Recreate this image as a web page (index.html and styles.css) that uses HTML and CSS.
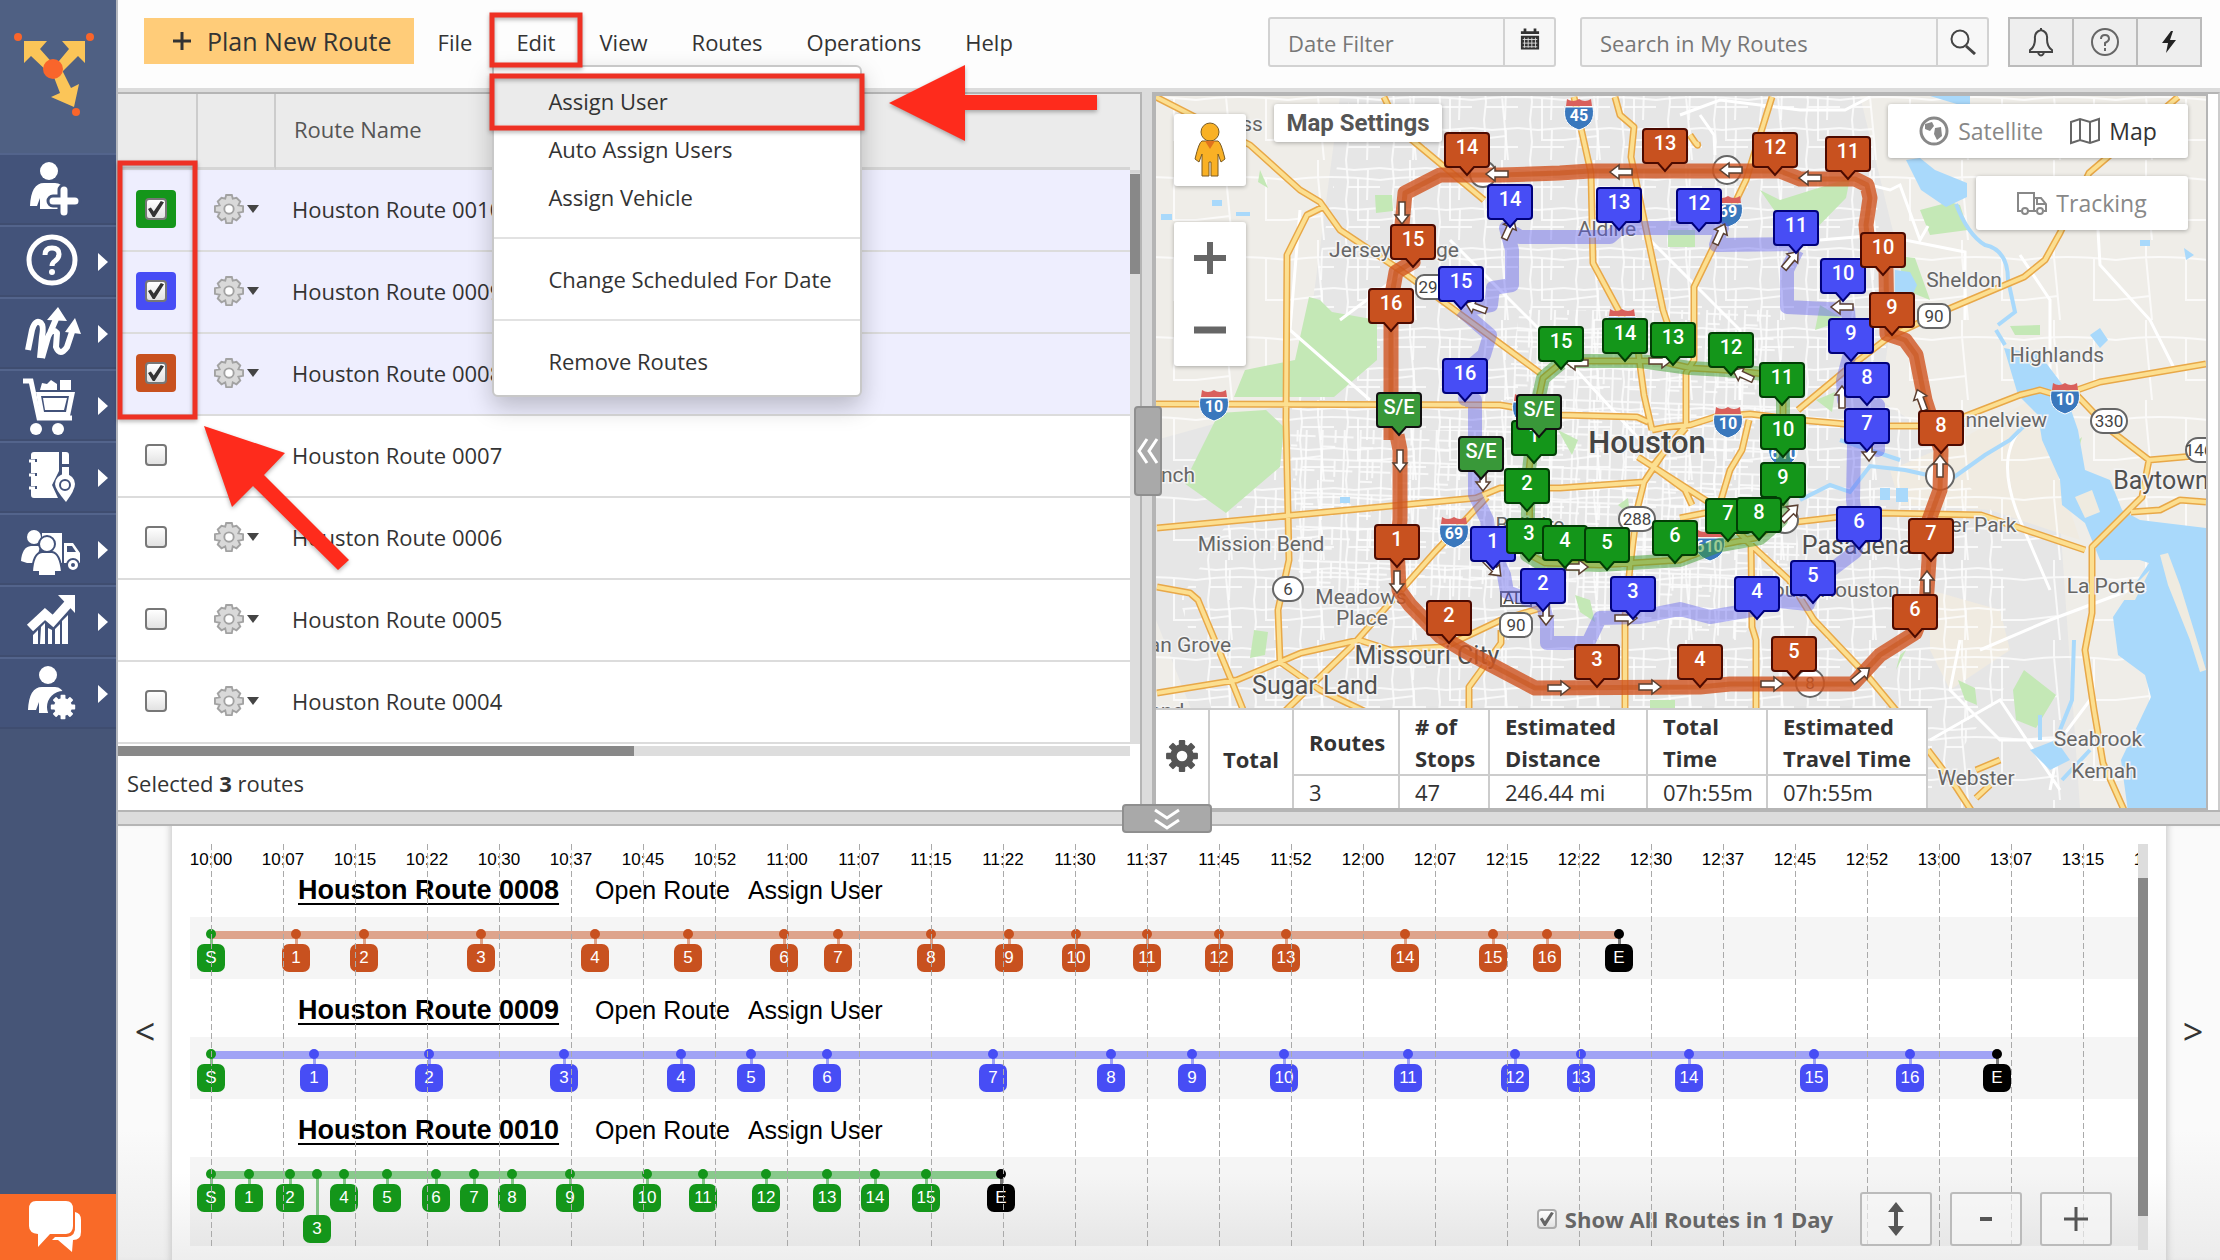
FILE: index.html
```html
<!DOCTYPE html>
<html lang="en">
<head>
<meta charset="utf-8">
<title>My Routes</title>
<link rel="stylesheet" href="styles.css">
</head>
<body>
<svg class="defs" aria-hidden="true">
  <defs>
    <symbol id="gear" viewBox="-16 -16 32 32" overflow="visible">
      <g id="teeth"><rect x="-3" y="-15" width="6" height="30" rx="1"/><rect x="-3" y="-15" width="6" height="30" rx="1" transform="rotate(45)"/><rect x="-3" y="-15" width="6" height="30" rx="1" transform="rotate(90)"/><rect x="-3" y="-15" width="6" height="30" rx="1" transform="rotate(135)"/></g>
      <circle r="11"/><circle r="5" class="gear-hole"/>
    </symbol>
    <symbol id="gear-line" viewBox="-16 -16 32 32" overflow="visible">
      <path d="M-3-15H3L4-11 8-12 12-8 10-4 15-3V3L10 4 12 8 8 12 4 10 3 15H-3L-4 10-8 12-12 8-10 4-15 3V-3L-10-4-12-8-8-12-4-11Z" fill="#d9d9d9" stroke="#a2a2a2" stroke-width="2"/>
      <circle r="5" fill="#fff" stroke="#a2a2a2" stroke-width="2"/>
    </symbol>
    <symbol id="interstate" viewBox="-15 -16 30 34" overflow="visible">
      <path d="M-14-6C-16 6-12 13 0 17 12 13 16 6 14-6Z" fill="#3a78bd" stroke="#fff"/>
      <path d="M-13-7-12-14Q-6-10 0-14 6-10 12-14L13-7Z" fill="#d9605c"/>
    </symbol>
    <symbol id="heading" viewBox="-12 -7 24 14" overflow="visible"><path d="M-11-3H2V-7L11 0 2 7V3H-11Z" fill="#fff" stroke="#5b4032" stroke-width="1.5"/></symbol>
  </defs>
</svg>

<div class="app">
  <nav class="sidebar" aria-label="Main">
    <a class="logo" href="#" aria-label="Home">
      <svg viewBox="0 0 84 88" width="84" height="88"><g fill="#fbc558"><path d="M10 9H33L26 17 42 35 36 42 17 24 10 31Z"/><path d="M71 9H48L55 17 40 35 46 42 64 24 71 31Z"/><path d="M38 40 48 38 57 56 65 52 60 75 37 65 46 61Z"/></g><g fill="#f9652b"><circle cx="39" cy="37" r="10"/><circle cx="4" cy="5" r="4"/><circle cx="76" cy="5" r="4"/><circle cx="62" cy="80" r="4"/></g></svg>
    </a>
    <a class="nav-item" href="#" aria-label="Add user"><svg viewBox="0 0 60 60"><circle cx="27" cy="12" r="9"/><path d="M8 47Q9 24 22 24H33Q40 24 43 32V50H18V39L15 47Z"/><path d="M42 31V53M31 42H53" class="line cut"/><path d="M42 31V53M31 42H53" class="line bold"/></svg></a>
    <a class="nav-item more" href="#" aria-label="Help"><svg viewBox="0 0 60 60"><ellipse cx="30" cy="29" rx="23" ry="23" class="line thick"/><path d="M23 24Q23 17 30 17 37 17 37 23 37 27 33 30 30 32 30 35" class="line thick"/><circle cx="30" cy="41" r="3"/></svg></a>
    <a class="nav-item more" href="#" aria-label="Routes"><svg viewBox="0 0 60 60"><path d="M6 47 10 27Q13 16 19 20 22 23 20 34L18 55M20 55 26 34Q30 24 35 30L34 44Q38 54 45 44L51 26M28 30 34 16" class="line route-line"/><path d="M25 17 36 4 45 18ZM43 29 53 15 59 31Z"/></svg></a>
    <a class="nav-item more" href="#" aria-label="Orders"><svg viewBox="0 0 60 60"><path d="M1 6H9L17 43H50" class="line thick"/><path d="M14 17H53L48 41H18Z"/><path d="M18 15 20 8 25 9 29 5 35 9V15ZM38 5H49V15H38Z"/><path d="M19 21H47L44 37H22Z" fill="#42527a"/><path d="M21 23H45L42 35H23Z"/><circle cx="14" cy="54" r="6"/><circle cx="36" cy="54" r="6"/></svg></a>
    <a class="nav-item more" href="#" aria-label="Address book"><svg viewBox="0 0 60 60"><path d="M12 5H37V24L30 38 36 51H12Q9 51 9 48V42H15V39H9V29H15V26H9V15H15V12H9V8Q9 5 12 5ZM40 5H44Q47 5 47 8V17H40ZM40 20H47V29H40Z"/><path d="M7 14H13M7 28H13M7 41H13" class="line"/><path d="M44 55Q33 42 33 37A10 10 0 0 1 53 37Q53 43 44 55Z"/><circle cx="43" cy="38" r="5" fill="#fff" stroke="#42527a" stroke-width="2"/></svg></a>
    <a class="nav-item more" href="#" aria-label="Team"><svg viewBox="0 0 60 60"><path d="M20 14H40V44H20ZM42 24H51L58 34V44H42Z"/><path d="M45 27H50L54 33H45Z" fill="#42527a"/><circle cx="12" cy="18" r="7"/><path d="M-1 42Q0 28 9 27H18L14 44H5Z"/><circle cx="51" cy="46" r="6" stroke="#42527a" stroke-width="2"/><circle cx="51" cy="46" r="2" fill="#42527a"/><g stroke="#42527a" stroke-width="2"><path d="M10 53Q11 34 20 33H30Q38 34 40 53H34V57H16V53Z"/><circle cx="25" cy="25" r="8"/></g></svg></a>
    <a class="nav-item more" href="#" aria-label="Reports"><svg viewBox="0 0 60 60"><path d="M8 37 23 23 31 30 48 11" class="line huge"/><path d="M36 4H53V22Z"/><path d="M11 44 16 39V53H11ZM19 36 23 32V53H18ZM26 37 30 39V53H26ZM33 38 38 33V53H33ZM40 30 46 24V53H40Z"/></svg></a>
    <a class="nav-item more" href="#" aria-label="User settings"><svg viewBox="0 0 60 60"><circle cx="26" cy="12" r="9"/><path d="M6 47Q7 24 20 24H33Q40 24 43 33L34 50H17V39L14 47Z"/><circle cx="41" cy="44" r="16" fill="#43537a"/><use href="#gear" x="28" y="31" width="26" height="26" class="nav-gear"/></svg></a>
    <button class="chat" type="button" aria-label="Chat"><svg viewBox="0 0 54 54" width="54" height="54"><path d="M8 1H38Q45 1 45 9V26Q45 33 38 34H22L10 47V34Q1 33 1 26V9Q1 1 8 1Z"/><path d="M47 12Q53 13 53 20V32Q53 40 45 40L44 52 30 40H24L27 37H39Q48 36 47 26Z"/></svg></button>
  </nav>

  <div class="content">
    <header class="topbar">
      <button class="plan" type="button"><svg width="18" height="20" viewBox="0 0 18 20"><path d="M9 1V19M0 10H18" stroke="#333" stroke-width="3"/></svg>Plan New Route</button>
      <ul class="menu">
        <li><a href="#">File</a></li>
        <li class="open"><a href="#">Edit</a>
          <ul class="dropdown">
            <li class="active"><a href="#">Assign User</a></li>
            <li><a href="#">Auto Assign Users</a></li>
            <li class="split"><a href="#">Assign Vehicle</a></li>
            <li class="split"><a href="#">Change Scheduled For Date</a></li>
            <li><a href="#">Remove Routes</a></li>
          </ul>
        </li>
        <li><a href="#">View</a></li>
        <li><a href="#">Routes</a></li>
        <li><a href="#">Operations</a></li>
        <li><a href="#">Help</a></li>
      </ul>
      <div class="field date"><input type="text" placeholder="Date Filter" aria-label="Date Filter"><button type="button" aria-label="Open calendar"><svg width="20" height="23" viewBox="0 0 22 24"><path d="M1 3H4V0H7V3H15V0H18V3H21V6H1ZM1 8H21V23H1Z" fill="#333"/><path d="M3 12H19M3 16H19M3 20H19M5 10V21M9 10V21M13 10V21M17 10V21" stroke="#ddd" stroke-width="1"/></svg></button></div>
      <div class="field search"><input type="text" placeholder="Search in My Routes" aria-label="Search in My Routes"><button type="button" aria-label="Search"><svg width="26" height="26" viewBox="0 0 26 26" fill="none" stroke="#444"><circle cx="10" cy="10" r="8.500" stroke-width="2"/><path d="M16 17 25 25" stroke-width="3"/></svg></button></div>
      <div class="tools">
        <button type="button" aria-label="Notifications"><svg width="26" height="30" viewBox="0 0 26 30" fill="none" stroke="#444" stroke-width="2"><path d="M13 3Q6 5 7 12 7 20 2 23V25H24V23Q19 20 19 12 20 5 13 3ZM12 2H14M10 26Q13 31 16 26"/></svg></button>
        <button type="button" aria-label="Help"><svg width="30" height="30" viewBox="0 0 30 30" fill="none" stroke="#666" stroke-width="2"><circle cx="15" cy="15" r="13"/><path d="M11 12Q11 8 15 8 19 8 19 12 19 14 15 16V19M15 21V24"/></svg></button>
        <button type="button" aria-label="Quick actions"><svg width="16" height="22" viewBox="0 0 16 22"><path d="M10 0 1 12H7L5 22 15 9H9L12 0Z" fill="#222"/></svg></button>
      </div>
    </header>

    <main class="workspace">
      <section class="routes">
        <div class="routes-scroll">
          <table class="route-table">
            <thead><tr><th class="c-check"></th><th class="c-gear"></th><th>Route Name</th></tr></thead>
            <tbody id="route-rows"></tbody>
          </table>
          <div class="vtrack"><div class="vthumb"></div></div>
        </div>
        <div class="htrack"><div class="hthumb"></div></div>
        <p class="selected">Selected <b>3</b> routes</p>
      </section>
      <div class="gutter"><button class="handle side" type="button" aria-label="Collapse map"><svg width="22" height="28" viewBox="0 0 22 28" fill="none" stroke="#fff" stroke-width="3"><path d="M10 2 2 14 10 26M20 2 12 14 20 26"/></svg></button></div>

      <section class="map" aria-label="Map">
        <svg class="canvas" viewBox="1156 96 1050 712" preserveAspectRatio="xMinYMin slice">
          <defs>
            <pattern id="blocks" width="46" height="40" patternUnits="userSpaceOnUse"><path d="M0 8 20 10 46 8M12 0 14 22 12 40M34 9 33 40M14 27H46" class="street"/></pattern>
            <pattern id="dense" width="38" height="34" patternUnits="userSpaceOnUse" patternTransform="rotate(2)"><path d="M0 5H38M7 0V34M20 5V22M29 0V34M7 16H38M7 26H20" class="street"/></pattern>
            <pattern id="rural" width="92" height="80" patternUnits="userSpaceOnUse"><path d="M0 20Q40 14 92 20M30 17 36 80M30 0V17M70 18V60H92M0 60 34 56" class="street"/></pattern>
          </defs>
          <rect x="1156" y="96" width="1300" height="900" fill="#efede8"/>
          <path d="M1340 96H1860L1900 260 1880 400 2060 520 2080 808H1230L1156 620V440L1300 400Z" fill="#e6e6e6"/>
          <path d="M1960 440 2030 400 2060 480 2080 540 1990 510 1900 505 1890 470ZM1930 590 2000 610 2010 650 1950 690 1930 650Z" fill="#f0ebe1"/>
          <rect x="1156" y="96" width="1300" height="900" fill="url(#rural)"/>
          <path d="M1350 96H1870L1890 400 2000 520 2010 680 1920 808H1240L1180 600 1290 420Z" fill="url(#blocks)"/>
          <path d="M1520 310H1770L1800 560 1740 640 1540 600 1300 590 1290 430 1500 430Z" fill="url(#dense)"/>
          <g class="park">
            <path d="M1309 297 1320 300 1332 312 1377 320V360L1334 397H1234L1245 370 1295 360Z"/>
            <path d="M1219 413 1266 410 1284 427 1280 467 1226 513 1184 483Z"/>
            <path d="M1375 195H1392L1393 211 1376 213ZM1760 190 1780 200 1850 178 1846 198 1800 245 1788 230Z"/>
            <path d="M1920 210 1950 202 1960 205 1968 230 1930 235ZM2010 326 2040 325 2040 335 2015 335ZM2013 690 2024 670 2056 695 2036 728 2016 720Z"/>
            <path d="M1254 630 1268 632 1265 655 1250 658ZM1575 595 1590 600 1595 622 1580 612ZM1896 670 1906 650 1900 655ZM1958 680 1975 688 1977 705 1965 700ZM1650 700H1675V710H1650ZM1260 170 1268 188 1258 182ZM1668 230H1695V247H1668ZM1898 256 1915 258 1930 300 1905 290ZM2062 455 2082 437 2076 460ZM1820 305 1845 320 1815 330ZM1558 430 1578 440 1572 455ZM1816 400 1835 392 1832 412ZM1618 505 1628 498 1630 515Z"/>
          </g>
          <g class="street wide">
            <path d="M1680 115 1720 100 1800 110 1845 110 1870 97M1700 115 1714 135 1715 155M1850 180 1890 190 1900 185 1920 240 1928 226M1820 240 1880 235 1965 252V320M2020 255 2050 300V380M2098 230 2100 265 2150 320 2175 370M1450 240 1540 330 1640 440M1300 210 1290 330 1370 400M1340 320 1420 260M1640 230 1740 330 1740 400M2020 430Q1995 460 2020 520L2050 590M1930 740 2000 700 2060 790M1960 640 1950 690 2000 740 2080 740M1980 650 2050 620 2130 590M2050 790 2060 740 2090 700"/>
          </g>
          <g class="water">
            <path d="M2099 547 2124 525 2206 530H2500V900H2140L2121 760 2151 697 2145 675 2118 655 2113 617 2149 563Z"/>
            <path d="M2004 348 2040 355 2062 384 2078 430 2085 470 2110 480 2122 510 2140 520 2206 528V560H2100L2085 523 2062 505 2060 480 2042 440 2038 415 2018 395Z"/>
            <path d="M1906 160 1920 158 1935 170 1967 183V197L1946 207 1921 190ZM1895 270 1910 272 1917 285 1908 305 1895 295ZM1930 96H1970V108ZM2090 335 2100 328 2108 340 2100 348ZM2030 750 2056 740 2070 760 2050 770ZM2140 240H2150V246H2140ZM2184 248 2194 255 2186 260Z"/>
            <path d="M1956 204Q1968 235 1985 245 2008 250 2008 280L2015 312 1998 325M1996 330 2005 345M1800 500 1830 485 1850 492 1870 466 1905 470 1950 480 1985 455 2010 440 2030 420M1840 440 1900 460M2062 780 2090 750M2074 640 2072 700 2060 730M2040 715V740" class="river"/>
            <path d="M1880 488H1890V500H1880ZM1896 488H1908V502H1896ZM1212 200H1222V206H1212ZM1236 212H1250V216H1236ZM1340 497H1350V503H1340ZM1161 214H1172V220H1161Z"/>
          </g>
          <g fill="#efebe0"><path d="M2075 497 2092 490 2100 512 2085 518ZM2160 555 2168 553 2180 585 2200 650 2206 670 2200 672 2190 640 2168 585ZM2120 600 2150 570 2135 600Z"/></g>
          <g class="hwy">
            <path id="roads" d="M1156 404 1500 405 1560 415 1637 417 1648 422M1652 430 1668 427 1690 425 1715 417 1750 414 1800 420 1867 426 1940 426 2020 395 2040 390 2060 396 2100 382 2206 364M1156 97 1250 145 1300 190 1320 202 1340 230 1400 270 1475 325 1540 373M1384 97 1400 130 1484 200M1323 207 1307 215 1287 255 1286 420 1289 560 1278 610 1280 662 1320 690 1366 712M1574 97 1591 173 1593 263 1620 313 1638 350 1644 395 1652 430M1615 97 1620 115 1634 127 1631 157 1663 310 1668 325M1772 97 1746 180 1694 287V360L1686 373V425L1652 467M1749 420 1742 450 1730 470 1721 500M1798 410 1846 370 1889 337 1946 310 2024 277 2045 260 2060 233 2089 173 2178 97M1157 528 1476 498 1500 488 1560 488 1644 482 1662 455 1686 428M1487 497 1434 553 1351 647 1284 712M1157 587 1190 593 1198 600 1230 677 1244 712M1157 693 1237 680 1301 653 1359 640 1390 650 1444 647 1501 620 1544 607M1501 630 1501 643 1469 687V712M1625 712V617L1630 567 1637 510 1644 482M1638 457 1652 466 1685 490 1692 505M1652 466 1713 505 1749 543 1789 580 1814 620 1871 680 1900 715M1928 750 1956 787 1971 810M1751 543 1752 627 1756 640V712M1680 518 1705 513 1796 522 1839 517 1881 513 1981 515 2085 550M2070 388 2110 430 2149 460 2142 497 2092 547V613L2085 650 2094 710 2103 763 2124 810M2149 460 2206 455M2131 512 2160 510 2180 500 2206 502M1690 135Q1700 150 1697 143M1976 770 2000 760M1976 798 1990 785M1561 363 1543 378 1536 410 1529 470 1530 555 1545 563 1600 565 1680 560 1720 545 1755 538 1781 520 1783 460V385L1765 374 1725 370 1690 368 1660 361H1570"/>
            <use href="#roads" class="core"/>
          </g>
          <g class="towns">
            <text x="1252" y="131">ss</text><text x="1394" y="257">Jersey Village</text><text x="1607" y="236">Aldine</text><text x="1964" y="287">Sheldon</text><text x="2057" y="362">Highlands</text><text x="1988" y="427">Channelview</text><text x="1178" y="482">nch</text><text x="1261" y="551">Mission Bend</text><text x="1361" y="604">Meadows</text><text x="1362" y="625">Place</text><text x="1190" y="652">an Grove</text><text x="1167" y="718">end</text><text x="1830" y="597">South Houston</text><text x="1971" y="532">Deer Park</text><text x="1530" y="532">Bellaire</text><text x="2106" y="593">La Porte</text><text x="2098" y="746">Seabrook</text><text x="2104" y="778">Kemah</text><text x="1976" y="785">Webster</text>
          </g>
          <g class="cities"><text x="1427" y="664">Missouri City</text><text x="1315" y="694">Sugar Land</text><text x="1857" y="554">Pasadena</text><text x="2161" y="489">Baytown</text></g>
          <text class="metro" x="1647" y="453">Houston</text>
          <g class="shields">
            <use href="#interstate" x="1564" y="97" width="30" height="34"/><text x="1579" y="121">45</text>
            <use href="#interstate" x="1199" y="388" width="30" height="34"/><text x="1214" y="412">10</text>
            <use href="#interstate" x="1713" y="405" width="30" height="34"/><text x="1728" y="429">10</text>
            <use href="#interstate" x="2050" y="381" width="30" height="34"/><text x="2065" y="405">10</text>
            <use href="#interstate" x="1439" y="515" width="30" height="34"/><text x="1454" y="539">69</text>
            <use href="#interstate" x="1713" y="194" width="30" height="34"/><text x="1728" y="217">69</text>
            <use href="#interstate" x="1607" y="307" width="30" height="34"/>
            <use href="#interstate" x="1512" y="392" width="30" height="34"/>
            <use href="#interstate" x="1692" y="528" width="36" height="34"/><text x="1709" y="552">610</text>
            <use href="#interstate" x="1765" y="434" width="36" height="34"/><text x="1784" y="459">610</text>
          </g>
          <g class="ovals">
            <rect x="1273" y="577" width="30" height="24" rx="12"/><text x="1288" y="595">6</text>
            <rect x="1619" y="507" width="36" height="24" rx="12"/><text x="1637" y="525">288</text>
            <rect x="2091" y="409" width="36" height="24" rx="12"/><text x="2109" y="427">330</text>
            <rect x="2186" y="438" width="36" height="24" rx="12"/><text x="2199" y="456">146</text>
            <rect x="1416" y="275" width="30" height="24" rx="8"/><text x="1428" y="293">29</text>
            <rect x="1918" y="304" width="32" height="24" rx="8"/><text x="1934" y="322">90</text>
            <rect x="1500" y="613" width="32" height="24" rx="8"/><text x="1516" y="631">90</text>
            <rect x="1501" y="592" width="30" height="14"/><text x="1513" y="604">AL</text>
            <circle cx="1785" cy="520" r="13"/>
            <circle cx="1483" cy="174" r="13"/><circle cx="1727" cy="170" r="14"/><circle cx="1940" cy="476" r="14"/><circle cx="1810" cy="683" r="14"/><text x="1810" y="689">8</text>
          </g>
          <path class="path red" d="M1397 435 1400 450V520L1397 545 1399 590 1410 605 1440 636 1465 651 1535 688 1700 687 1730 684H1853L1880 655 1915 633 1926 605 1929 560V520L1940 490 1941 450 1925 400 1916 355 1905 340 1887 334 1886 270 1868 245 1866 225 1870 198 1867 185 1855 179 1800 179 1780 171H1590L1560 173 1500 175H1440L1405 193 1402 225 1413 262 1396 272 1391 300V440"/>
          <path class="path core-line" d="M1400 450V520L1397 545 1399 590 1410 605 1440 636 1465 651 1535 688 1700 687 1730 684H1853L1880 655 1915 633 1926 605 1929 560V520L1940 490 1941 450 1925 400 1916 355 1905 340 1887 334 1886 270 1868 245 1866 225 1870 198 1867 185 1855 179 1800 179 1780 171H1590L1560 173 1500 175H1440L1405 193 1402 225 1413 262 1396 272 1391 300V440"/>
          <path class="path blue" d="M1480 480 1475 470V400L1465 399 1472 365 1484 355 1490 335 1461 310M1465 400H1475V495L1487 520 1490 545 1504 575 1507 592 1543 605 1547 620V643H1588L1600 618 1640 617 1680 609 1710 617 1757 609 1770 600 1808 604 1818 580 1855 552 1858 540 1853 500 1854 445 1878 450V405L1844 400 1843 380 1851 350 1848 310 1787 307V270L1797 250M1790 244 1716 245 1722 228 1620 228 1610 237 1520 237 1506 228 1512 250 1512 285 1493 288 1491 305 1461 310"/>
          <path class="path green" d="M1561 363 1543 378 1536 410 1529 470 1527 555 1540 563 1600 565 1680 560 1720 545 1760 538 1781 520 1783 460V385L1765 374 1725 370 1690 368 1640 361H1570"/>
          <g id="headings"></g>
          <g id="markers" class="markers"></g>
        </svg>

        <button class="map-btn pegman" type="button" aria-label="Street View"><svg width="32" height="56" viewBox="0 0 32 56" fill="#f9b125" stroke="#7a5b24"><circle cx="16" cy="10" r="9"/><path d="M8 19H24Q27 20 31 37L27 40 24 32V54H17V40H15V54H8V32L5 40 1 37Q5 20 8 19Z"/><path d="M11 19H21L16 27Z" fill="#e0731d" stroke="none"/></svg></button>
        <div class="zoom"><button type="button" aria-label="Zoom in"><svg width="32" height="32" viewBox="0 0 32 32"><path d="M16 0V32M0 16H32" stroke="#666" stroke-width="6"/></svg></button><button type="button" aria-label="Zoom out"><svg width="32" height="32" viewBox="0 0 32 32"><path d="M0 16H32" stroke="#666" stroke-width="7"/></svg></button></div>
        <button class="map-btn settings" type="button">Map Settings</button>
        <div class="map-type">
          <button type="button" class="off"><svg width="30" height="30" viewBox="0 0 30 30"><circle cx="15" cy="15" r="13" fill="none" stroke="#888" stroke-width="3"/><path d="M6 8 13 6 15 10 11 15 6 13ZM16 12 22 11 23 20 18 24 15 18Z" fill="#888"/></svg>Satellite</button>
          <button type="button"><svg width="30" height="28" viewBox="0 0 30 28" fill="none" stroke="#666" stroke-width="2"><path d="M1 5 10 2 20 5 29 2V23L20 26 10 23 1 26ZM10 2V23M20 5V26"/></svg>Map</button>
        </div>
        <button class="map-btn tracking" type="button"><svg width="30" height="24" viewBox="0 0 30 24" fill="none" stroke="#888" stroke-width="2"><path d="M4 20H1V2H17V20H11M17 7H24L29 13V20H27M19 20H17M20 8V13H28"/><circle cx="8" cy="20" r="3"/><circle cx="23" cy="20" r="3"/></svg>Tracking</button>

        <table class="stats">
          <thead><tr><td rowspan="2" class="s-gear"><button type="button" aria-label="Table settings"><svg width="34" height="34"><use href="#gear" width="34" height="34"/></svg></button></td><th rowspan="2" class="s-total">Total</th><th class="s-routes">Routes</th><th class="s-stops"># of Stops</th><th class="s-dist">Estimated Distance</th><th class="s-time">Total Time</th><th class="s-travel">Estimated Travel Time</th></tr>
          <tr><td>3</td><td>47</td><td>246.44 mi</td><td>07h:55m</td><td>07h:55m</td></tr></thead>
        </table>
      </section>
      <div class="edge"></div>
    </main>

    <div class="divider"><button class="handle base" type="button" aria-label="Collapse timeline"><svg width="28" height="22" viewBox="0 0 28 22" fill="none" stroke="#fff" stroke-width="3"><path d="M2 2 14 10 26 2M2 12 14 20 26 12"/></svg></button></div>

    <section class="timeline" aria-label="Timeline">
      <button class="pager prev" type="button">&lt;</button>
      <div class="chart">
        <div class="plot" id="plot"></div>
        <div class="track"><div class="thumb"></div></div>
        <div class="controls">
          <label><input type="checkbox" checked> Show All Routes in 1 Day</label>
          <button type="button" aria-label="Fit height"><svg width="16" height="34" viewBox="0 0 16 34"><path d="M8 0 16 10H10V24H16L8 34 0 24H6V10H0Z" fill="#555"/></svg></button>
          <button type="button" aria-label="Zoom timeline out"><svg width="24" height="24" viewBox="0 0 24 24"><path d="M6 12H18" stroke="#555" stroke-width="4"/></svg></button>
          <button type="button" aria-label="Zoom timeline in"><svg width="24" height="24" viewBox="0 0 24 24"><path d="M12 0V24M0 12H24" stroke="#555" stroke-width="3"/></svg></button>
        </div>
      </div>
      <button class="pager next" type="button">&gt;</button>
    </section>
  </div>

  <svg class="callouts" width="1120" height="600" viewBox="0 0 1120 600" aria-hidden="true">
    <g fill="none" stroke="#ee3124" stroke-width="5"><rect x="492" y="15" width="88" height="50"/><rect x="492" y="76" width="370" height="52"/><rect x="120" y="163" width="75" height="254"/></g>
    <g fill="#fe2b1c"><path d="M889 103 965 65V95H1097V110H965V141Z"/><path d="M204 426 285 453 264 475 349 560 338 570 253 486 232 507Z"/></g>
  </svg>
</div>
<script src="app.js"></script>
</body>
</html>
```
FILE: styles.css
```css
* { box-sizing: border-box; }
body { margin: 0; font: 22px/30px "Open Sans", "Noto Sans", sans-serif; color: #333; background: #fff; }
button { font: inherit; color: inherit; border: 0; padding: 0; background: none; cursor: pointer; }
a { color: inherit; text-decoration: none; }
ul { list-style: none; margin: 0; padding: 0; }
svg { display: block; }
.defs { position: absolute; width: 0; height: 0; }
.gear-hole { fill: #fff; }

.app { position: relative; display: flex; min-height: 100vh; overflow: hidden; }
.content { flex: 1; min-width: 0; display: flex; flex-direction: column; border-left: 2px solid #b5b8be; }

/* Sidebar */
.sidebar { width: 116px; flex: none; display: flex; flex-direction: column; background: #465577; }
.logo { height: 153px; padding: 32px 0 0 14px; background: #4f6083; }
.nav-item { position: relative; height: 72px; display: flex; align-items: center; padding-left: 22px; border-top: 2px solid #53648c; border-bottom: 2px solid #3f4d70; background: #43537a; }
.nav-item svg { width: 60px; height: 60px; fill: #fff; overflow: visible; }
.nav-item .line { fill: none; stroke: #fff; stroke-width: 3; }
.nav-item .thick { stroke-width: 5; }
.nav-item .route-line { stroke-width: 6; stroke-linejoin: round; }
.nav-item .bold { stroke-width: 7; stroke-linejoin: round; stroke-linecap: round; }
.nav-item .cut { stroke: #43537a; stroke-width: 13; stroke-linecap: round; }
.nav-item .huge { stroke-width: 9; }
.nav-item .gear-hole, .nav-gear .gear-hole { fill: #42527a; }
.nav-gear { stroke: none; }
.more::after { content: ""; position: absolute; right: 8px; top: 26px; border: 9px solid transparent; border-left: 10px solid #fff; border-right: 0; }
.chat { height: 66px; margin-top: auto; padding: 6px 28px; background: #f96a28; }
.chat svg { fill: #fff; }

/* Top bar */
.topbar { display: flex; align-items: center; height: 88px; padding: 0 18px 4px 26px; background: #fdfdfd; }
.plan { display: flex; align-items: center; gap: 16px; height: 46px; margin-top: -2px; padding: 0 22px 0 29px; font-size: 25px; background: #ffcc79; white-space: nowrap; }
.menu { display: flex; margin-left: 2px; }
.menu > li { position: relative; }
.menu > li > a { display: block; padding: 0 22px; }
.dropdown { position: absolute; z-index: 5; left: -2px; top: 38px; width: 370px; padding: 10px 0; background: #fff; border: 2px solid #c8c8c8; border-radius: 0 6px 6px 6px; box-shadow: 0 10px 24px rgba(0,0,0,.22); }
.dropdown a { display: block; padding: 9px 0 9px 54px; white-space: nowrap; }
.dropdown .active { background: #ebebeb; }
.dropdown .split { padding-bottom: 16px; margin-bottom: 16px; border-bottom: 2px solid #e2e2e2; }
.field { display: flex; height: 50px; border: 2px solid #d2d2d2; border-radius: 3px; background: #f7f7f7; }
.field input { flex: 1; min-width: 0; padding: 2px 18px 0; font: inherit; border: 0; border-right: 2px solid #d2d2d2; background: none; outline: 0; }
.field input::placeholder { color: #777; opacity: 1; }
.field button { width: 49px; display: grid; place-items: center; }
.date button { padding-bottom: 6px; }
.date { width: 288px; margin-left: auto; }
.search { width: 409px; margin-left: 24px; }
.tools { display: flex; width: 194px; height: 50px; margin-left: 19px; border: 2px solid #bbb; background: #eee; }
.tools button { flex: 1; display: grid; place-items: center; }
.tools button + button { border-left: 2px solid #bbb; }

/* Route list */
.workspace { display: grid; grid-template-columns: 1024fr 10px 1056fr 12px; border-top: 4px solid #dcdcdc; }
.routes { display: flex; flex-direction: column; border-top: 2px solid #b5b5b5; border-right: 2px solid #b5b5b5; min-width: 0; }
.routes-scroll { display: flex; position: relative; }
.route-table { flex: 1; border-collapse: separate; border-spacing: 0; table-layout: fixed; }
.route-table th { height: 76px; padding: 0 0 4px 18px; text-align: left; font-weight: 400; color: #555; background: #ebebeb; border-right: 2px solid #ccc; border-bottom: 3px solid #d5d5d5; }
.route-table th:last-child { border-right: 0; }
.route-table td { height: 82px; padding: 0 0 2px 16px; border-bottom: 2px solid #dcdcdc; }
.route-table td:first-child { padding-left: 18px; }
.route-table .c-check { width: 80px; }
.route-table .c-gear { width: 78px; }
.route-table .picked td { background: #eeeefe; }
.chip { display: grid; place-items: center; width: 40px; height: 38px; border-radius: 4px; }
.chip.red, .stop.red { background: #c8511f; }
.chip.blue, .stop.blue { background: #474df5; }
.chip.green, .stop.green { background: #14961a; }
input[type=checkbox] { appearance: none; position: relative; width: 22px; height: 22px; margin: 0; border: 2px solid #777; border-radius: 4px; background: linear-gradient(#fff, #e2e2e2); }
input[type=checkbox]:checked::before { content: ""; position: absolute; inset: 1px; background: #333; clip-path: polygon(0 50%, 18% 40%, 36% 66%, 80% 0, 100% 8%, 42% 100%, 30% 100%); }
.row-menu { display: flex; align-items: center; gap: 3px; }
.row-menu::after { content: ""; border: 6px solid transparent; border-top: 8px solid #444; border-bottom: 0; }
.vtrack { width: 10px; margin-top: 76px; padding-top: 4px; background: #ddd; }
.routes-scroll::after { content: ""; position: absolute; right: 0; top: 0; width: 10px; height: 76px; background: #ebebeb; border-bottom: 3px solid #d5d5d5; }
.vthumb { height: 100px; background: #888; }
.htrack { margin: 2px 10px 0 0; background: #ddd; }
.hthumb { width: 51%; height: 10px; background: #888; }
.selected { margin: 0; padding: 12px 9px; }

.gutter { position: relative; background: #dcdcdc; }
.handle { position: absolute; z-index: 3; display: grid; place-items: center; background: #a9a9a9; border: 2px solid #8f8f8f; border-radius: 4px; }
.handle.side { left: -8px; top: 314px; width: 28px; height: 90px; }
.handle.base { left: 1004px; top: -8px; width: 90px; height: 29px; }
.divider { position: relative; height: 16px; background: #dcdcdc; border: 2px solid #b5b5b5; border-width: 2px 0; }
.edge { background: #fff; border-top: 2px solid #b5b5b5; border-right: 2px solid #ccc; }

/* Map */
.map { position: relative; min-width: 0; overflow: hidden; border: solid #b5b5b5; border-width: 4px 2px 2px 4px; font-family: Roboto, sans-serif; background: #e8e8e6; }
.canvas { position: absolute; inset: 0; width: 100%; height: 100%; }
.street { fill: none; stroke: #fff; stroke-width: 2; opacity: .75; }
.wide { stroke-width: 3; opacity: 1; }
.park { fill: #c4e8b6; }
.water { fill: #a9d9fb; }
.river { stroke: #a9d9fb; stroke-width: 4; fill: none; }
.hwy { fill: none; stroke: #e8a848; stroke-width: 7; stroke-linejoin: round; }
.hwy .core { stroke: #fcdf90; stroke-width: 4; }
.towns, .cities, .metro { text-anchor: middle; fill: #666; font-size: 21px; paint-order: stroke; stroke: #f4f4f4; stroke-width: 3px; }
.cities { font-size: 25px; fill: #505050; }
.metro { font-size: 31px; font-weight: 500; fill: #444; }
.shields { text-anchor: middle; font-size: 16px; font-weight: 700; fill: #fff; }
.ovals { font-size: 17px; text-anchor: middle; fill: #fff; stroke: #666; stroke-width: 2; }
.ovals text { fill: #444; stroke: none; }
.path { fill: none; stroke-width: 15; stroke-linejoin: round; }
.path.red { stroke: #cf5420; opacity: .8; }
.core-line { stroke: #c8571f; stroke-width: 5; opacity: .6; }
.path.blue { stroke: #5a5aee; opacity: .42; stroke-width: 14; }
.path.green { stroke: #3a9a2a; opacity: .5; stroke-width: 14; }
.markers { font-size: 20px; font-weight: 500; text-anchor: middle; }
.markers text { fill: #fff; }
.markers path { stroke-width: 2; }
.markers .red { fill: #c8511f; stroke: #4c0a00; }
.markers .blue { fill: #474df5; stroke: #00007a; }
.markers .green { fill: #14961a; stroke: #023d05; }
.markers .depot { fill: #399839; stroke: #111; }
.map-btn, .zoom, .map-type { position: absolute; display: flex; align-items: center; justify-content: center; background: #fff; border-radius: 3px; box-shadow: 0 1px 4px rgba(0,0,0,.3); }
.pegman { left: 18px; top: 18px; width: 72px; height: 72px; }
.zoom { left: 18px; top: 126px; width: 72px; height: 144px; flex-direction: column; }
.zoom button { flex: 1; }
.settings { left: 118px; top: 8px; width: 168px; height: 38px; font-size: 24px; font-weight: 700; color: #555; }
.map-type { right: 18px; top: 8px; width: 300px; height: 54px; gap: 27px; font-family: "Open Sans", sans-serif; font-size: 23px; }
.map-type button { display: flex; align-items: center; gap: 9px; }
.off, .tracking { color: #888; }
.tracking { right: 18px; top: 80px; width: 212px; height: 54px; gap: 9px; font-family: "Open Sans", sans-serif; font-size: 23px; }
.stats { position: absolute; left: -2px; bottom: -2px; border-collapse: collapse; background: #fff; font: 22px/32px "Open Sans", sans-serif; }
.stats th, .stats td { padding: 0 0 0 15px; text-align: left; border: 2px solid #ccc; }
.stats td { height: 34px; }
.stats th { height: 66px; }
.stats .s-gear { width: 54px; padding: 0 0 0 9px; fill: #555; }
.stats .s-total { width: 84px; padding: 0 0 0 13px; vertical-align: middle; }
.s-routes { width: 106px; }
.s-stops { width: 90px; }
.s-dist { width: 158px; }
.s-time { width: 120px; }
.s-travel { width: 160px; }

/* Timeline */
.timeline { flex: 1; display: flex; }
.pager { width: 54px; padding-bottom: 22px; font-size: 36px; background: linear-gradient(#fafafa 70%, #ececec); }
.prev { box-shadow: inset -6px 0 6px -4px #ccc; }
.next { box-shadow: inset 6px 0 6px -4px #ccc; }
.chart { position: relative; flex: 1; min-width: 0; display: flex; padding: 18px 18px 12px; background: linear-gradient(#fff 80%, #eee); font-family: "Liberation Sans", Arial, sans-serif; color: #000; }
.plot { position: relative; flex: 1; min-width: 0; overflow: hidden; }
.ticks { height: 31px; font-size: 17px; line-height: 32px; }
.tick { position: absolute; top: 0; bottom: 2px; width: 60px; margin-left: -30px; text-align: center; }
.tick::before { content: ""; position: absolute; z-index: 2; left: 30px; top: 0; bottom: 0; width: 1px; background: repeating-linear-gradient(#aaa 0 6px, transparent 6px 9px); }
.lane { margin-bottom: 16px; }
.lane:last-child { margin-bottom: 2px; }
.lane-head { display: flex; align-items: center; height: 30px; margin-bottom: 12px; padding-left: 108px; font-size: 25px; position: relative; }
.lane-head .name { margin-right: 36px; font-size: 27px; font-weight: 700; text-decoration: underline; text-decoration-thickness: 2px; text-underline-offset: 4px; }
.lane-head .act { margin-right: 18px; }
.band { position: relative; height: 62px; background: rgba(0,0,0,.04); }
.band.tall { height: 89px; }
.bar { position: absolute; left: 21px; top: 14px; height: 8px; }
.bar.red { background: #dea48c; }
.bar.blue { background: #a0a3f5; }
.bar.green { background: #89c98c; }
.stop { position: absolute; top: 27px; width: 28px; height: 28px; margin-left: 7px; border-radius: 7px; color: #fff; font-size: 17px; line-height: 28px; text-align: center; }
.stop::before { content: ""; position: absolute; left: 9px; top: -15px; width: 10px; height: 10px; border-radius: 50%; background: inherit; }
.stop::after { content: ""; position: absolute; left: 13px; top: -6px; width: 3px; height: 6px; background: inherit; opacity: .5; }
.stop.low { top: 58px; }
.stop.low::before { top: -46px; }
.stop.low::after { top: -37px; height: 37px; }
.stop.end { background: #000; }
.track { width: 10px; padding-top: 34px; background: #ddd; margin-bottom: -2px; }
.thumb { height: 338px; background: #888; }
.controls { position: absolute; z-index: 4; right: 54px; bottom: 14px; display: flex; align-items: center; gap: 18px; color: #666; }
.controls label { display: flex; align-items: center; gap: 8px; margin-right: 9px; font: 700 22px/30px "Open Sans", sans-serif; }
.controls label input { width: 20px; height: 20px; border-color: #aaa; }
.controls label input:checked::before { background: #666; }
.controls button { display: grid; place-items: center; width: 72px; height: 54px; border: 2px solid #bbb; border-radius: 3px; background: rgba(248,248,248,.6); }

.callouts { position: absolute; z-index: 10; left: 0; top: 0; pointer-events: none; filter: drop-shadow(0 2px 2px rgba(0,0,0,.3)); }
```
FILE: app.js
```js
const routes = [
  { name: 'Houston Route 0010', color: 'green' }, { name: 'Houston Route 0009', color: 'blue' },
  { name: 'Houston Route 0008', color: 'red' }, { name: 'Houston Route 0007', noMenu: true },
  { name: 'Houston Route 0006' }, { name: 'Houston Route 0005' }, { name: 'Houston Route 0004' }
];
const gear = '<button class="row-menu" type="button" aria-label="Route actions"><svg width="30" height="30"><use href="#gear-line" width="30" height="30"/></svg></button>';
document.getElementById('route-rows').innerHTML = routes.map(r => `
  <tr class="${r.color ? 'picked' : ''}"><td><span class="chip ${r.color || ''}"><input type="checkbox" aria-label="${r.name}" ${r.color ? 'checked' : ''}></span></td>
  <td>${r.noMenu ? '' : gear}</td><td>${r.name}</td></tr>`).join('');

/* Map markers: label, x of the tip, top of the box */
const markers = {
  red: [[14,1467,132],[13,1665,128],[12,1775,132],[11,1848,136],[10,1883,232],[9,1892,292],[8,1941,410],[7,1931,518],[6,1915,594],[5,1794,636],[4,1700,644],[3,1597,644],[2,1449,600],[1,1397,524],[15,1413,224],[16,1391,288]],
  blue: [[14,1510,184],[13,1619,187],[12,1699,188],[11,1796,210],[10,1843,258],[9,1851,318],[8,1867,362],[7,1867,408],[6,1859,506],[5,1813,560],[4,1757,576],[3,1633,576],[2,1543,568],[1,1493,526],[16,1465,358],[15,1461,266]],
  green: [[15,1561,326],[14,1625,318],[13,1673,322],[12,1731,332],[11,1782,362],[10,1783,414],[9,1783,462],[7,1728,498],[8,1759,497],[6,1675,520],[3,1529,518],[4,1565,525],[5,1607,527],[2,1527,468],[1,1534,420]],
  depot: [['S/E',1539,394],['S/E',1399,392],['S/E',1481,436]]
};
const order = ['blue', 'red', 'green', 'depot'];
document.getElementById('markers').innerHTML = order.map(c => markers[c].map(([t, x, y]) =>
  `<path class="${c}" d="M${x - 19} ${y + 1}h38q3 0 3 3v28q0 3-3 3h-12l-7 8-7-8h-12q-3 0-3-3v-28q0-3 3-3z"/><text x="${x}" y="${y + 22}">${t}</text>`).join('')).join('');

const headings = [[1497,174,180],[1621,172,180],[1731,170,180],[1810,178,180],[1402,213,90],[1400,461,90],[1397,582,90],[1559,688,0],[1650,687,0],[1772,684,0],[1861,675,-40],[1927,582,-90],[1940,466,-90],[1921,400,-110],[1720,234,-65],[1791,260,-50],[1842,307,180],[1476,307,-160],[1509,229,-65],[1626,618,0],[1546,614,90],[1577,567,0],[1743,375,-155],[1577,363,180],[1660,361,0],[1483,480,90],[1869,450,90],[1790,513,-45],[1493,568,45],[1842,397,-90]];
document.getElementById('headings').innerHTML = headings.map(([x, y, a]) =>
  `<use href="#heading" x="-12" y="-7" width="24" height="14" transform="translate(${x} ${y}) rotate(${a})"/>`).join('');

/* Timeline: pixel offset of every stop from 10:00 */
const lanes = [
  { name: 'Houston Route 0008', color: 'red', at: [85,153,270,384,477,573,627,720,798,865,936,1008,1075,1194,1282,1336], end: 1408 },
  { name: 'Houston Route 0009', color: 'blue', at: [103,218,353,470,540,616,782,900,981,1073,1197,1304,1370,1478,1603,1699], end: 1786 },
  { name: 'Houston Route 0010', color: 'green', at: [38,79,106,133,176,225,263,301,359,436,492,555,616,664,715], end: 790, low: 3 }
];
let html = '<div class="ticks">';
for (let i = 0; i < 28; i++) {
  const m = 600 + Math.floor(i * 7.5);
  html += `<span class="tick" style="left:${21 + i * 72}px">${Math.floor(m / 60)}:${String(m % 60).padStart(2, '0')}</span>`;
}
html += '</div>';
for (const l of lanes) {
  html += `<div class="lane"><div class="lane-head"><a class="name" href="#">${l.name}</a><a class="act" href="#">Open Route</a><a href="#">Assign User</a></div>
  <div class="band ${l.low ? 'tall' : ''}"><div class="bar ${l.color}" style="width:${l.end}px"></div><span class="stop green" style="left:0">S</span>`;
  l.at.forEach((x, i) => { html += `<span class="stop ${l.color} ${l.low === i + 1 ? 'low' : ''}" style="left:${x}px">${i + 1}</span>`; });
  html += `<span class="stop end" style="left:${l.end}px">E</span></div></div>`;
}
document.getElementById('plot').innerHTML = html;
```
